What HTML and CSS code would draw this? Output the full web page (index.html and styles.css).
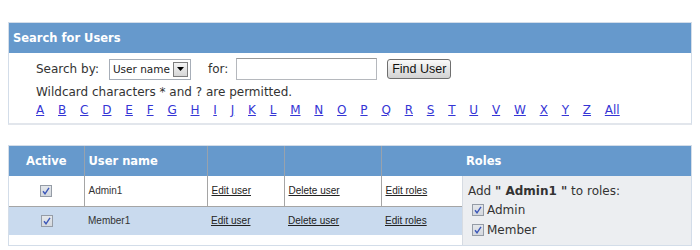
FILE: index.html
```html
<!DOCTYPE html>
<html lang="en">
<head>
<meta charset="UTF-8" />
<title>Manage Users</title>
<link rel="stylesheet" href="styles.css">
</head>
<body>
  <div class="panel">
    <div class="panel-head">Search for Users</div>
    <div class="search-body">
      <div class="search-row">
        <span>Search by:</span>
        <div class="select">
          <span class="select-value">User name</span>
          <span class="select-btn"><svg width="7" height="4" viewBox="0 0 7 4"><path d="M0 0h7L3.5 4z" fill="#000"/></svg></span>
        </div>
        <span class="for-label">for:</span>
        <input class="search-input" type="text" />
        <button class="find-btn" type="button">Find User</button>
      </div>
      <p class="hint">Wildcard characters * and ? are permitted.</p>
      <div class="alpha">
        <a href="#">A</a><a href="#">B</a><a href="#">C</a><a href="#">D</a><a href="#">E</a><a href="#">F</a><a href="#">G</a><a href="#">H</a><a href="#">I</a><a href="#">J</a><a href="#">K</a><a href="#">L</a><a href="#">M</a><a href="#">N</a><a href="#">O</a><a href="#">P</a><a href="#">Q</a><a href="#">R</a><a href="#">S</a><a href="#">T</a><a href="#">U</a><a href="#">V</a><a href="#">W</a><a href="#">X</a><a href="#">Y</a><a href="#">Z</a><a href="#">All</a>
      </div>
    </div>
  </div>

  <div class="users">
    <table class="grid">
      <colgroup>
        <col class="w-active"><col class="w-name"><col class="w-edit"><col class="w-delete"><col class="w-roles">
      </colgroup>
      <thead>
        <tr><th class="center">Active</th><th>User name</th><th></th><th></th><th></th></tr>
      </thead>
      <tbody>
        <tr>
          <td class="center"><span class="cb"><svg width="10" height="10" viewBox="0 0 10 10"><path d="M2 5.2l2 2.6L8 1.8" fill="none" stroke="#3b57b8" stroke-width="1.4"/></svg></span></td>
          <td>Admin1</td>
          <td><a href="#">Edit user</a></td>
          <td><a href="#">Delete user</a></td>
          <td><a href="#">Edit roles</a></td>
        </tr>
        <tr class="alt">
          <td class="center"><span class="cb"><svg width="10" height="10" viewBox="0 0 10 10"><path d="M2 5.2l2 2.6L8 1.8" fill="none" stroke="#3b57b8" stroke-width="1.4"/></svg></span></td>
          <td>Member1</td>
          <td><a href="#">Edit user</a></td>
          <td><a href="#">Delete user</a></td>
          <td><a href="#">Edit roles</a></td>
        </tr>
      </tbody>
    </table>
    <div class="roles">
      <div class="roles-head">Roles</div>
      <div class="roles-body">
        <p class="roles-title">Add <b>" Admin1 "</b> to roles:</p>
        <label class="role"><span class="cb"><svg width="10" height="10" viewBox="0 0 10 10"><path d="M2 5.2l2 2.6L8 1.8" fill="none" stroke="#3b57b8" stroke-width="1.4"/></svg></span>Admin</label>
        <label class="role"><span class="cb"><svg width="10" height="10" viewBox="0 0 10 10"><path d="M2 5.2l2 2.6L8 1.8" fill="none" stroke="#3b57b8" stroke-width="1.4"/></svg></span>Member</label>
      </div>
    </div>
  </div>
</body>
</html>
```
FILE: styles.css
```css
* {
  box-sizing: border-box;
}
body {
  margin: 8px;
  font-family: 'DejaVu Sans', Verdana, sans-serif;
  font-size: 12px;
  color: #333;
  background: #fff;
}

/* Search panel */
.panel {
  margin-top: 14px;
  border: 1px solid #d3dde9;
  border-bottom: 2px solid #e2e6ec;
}
.panel-head {
  height: 30px;
  line-height: 30px;
  padding-left: 4px;
  background: #6699cc;
  color: #fff;
  font-weight: bold;
  font-size: 11.5px;
}
.search-body {
  padding: 5px 0 4px 27px;
}
.search-row {
  display: flex;
  align-items: center;
  height: 22px;
}
.select {
  display: flex;
  align-items: center;
  flex: none;
  margin-left: 10px;
  width: 82px;
  height: 21px;
  border: 1px solid #a7aeb8;
  background: #fff;
}
.select-value {
  flex: 1;
  padding-left: 3px;
  white-space: nowrap;
  overflow: hidden;
  font-size: 10.5px;
  color: #222;
}
.select-btn {
  display: flex;
  align-items: center;
  justify-content: center;
  flex: none;
  width: 15px;
  height: 15px;
  margin-right: 2px;
  border: 1px solid #7d7d7d;
  background: linear-gradient(#f4f4f4, #d6d6d6);
}
.for-label {
  margin-left: 17px;
}
.search-input {
  flex: none;
  margin: 0 0 0 8px;
  width: 141px;
  height: 22px;
  border: 1px solid #b5b8bd;
  border-top-color: #999;
  padding: 0 3px;
  font: inherit;
}
.find-btn {
  flex: none;
  margin-left: 10px;
  height: 20px;
  width: 64px;
  padding: 0;
  border: 1px solid #6f6f6f;
  border-radius: 3px;
  background: linear-gradient(#fafafa, #e6e6e6 50%, #d3d3d3);
  font-family: 'Liberation Sans', Arial, sans-serif;
  font-size: 12.5px;
  color: #111;
}
.hint {
  margin: 3px 0 0;
  line-height: 18px;
}
.alpha {
  line-height: 18px;
}
.alpha a {
  margin-right: 13.8px;
  color: #3535d5;
}

/* Users grid */
.users {
  display: flex;
  margin-top: 20px;
  border: 1px solid #d3dde9;
  height: 101px;
}
.grid {
  width: 453px;
  border-collapse: collapse;
  table-layout: fixed;
  align-self: flex-start;
  font-family: 'Liberation Sans', Tahoma, sans-serif;
  font-size: 10px;
}
.w-active { width: 75px; }
.w-name { width: 123px; }
.w-edit { width: 77px; }
.w-delete { width: 97px; }
.w-roles { width: 81px; }
.grid th {
  height: 30px;
  padding: 0 4px;
  background: #6699cc;
  color: #fff;
  text-align: left;
  font-family: 'DejaVu Sans', Verdana, sans-serif;
  font-size: 11.5px;
  border-right: 1px solid #98a2ad;
}
.grid td {
  height: 30px;
  padding: 0 4px;
  border-right: 1px solid #a5a5a5;
  border-bottom: 1px solid #a5a5a5;
  color: #333;
}
.grid th:last-child,
.grid td:last-child {
  border-right: none;
}
.grid .center {
  text-align: center;
}
.grid a {
  color: #222;
}
.grid tr.alt td {
  height: 29px;
  background: #c9daee;
  border: none;
}

.cb {
  display: inline-flex;
  align-items: center;
  justify-content: center;
  width: 12px;
  height: 12px;
  border: 1px solid #959ca6;
  background: linear-gradient(#e4e7eb, #d4d8de);
  vertical-align: middle;
}

/* Roles column */
.roles {
  flex: 1;
  display: flex;
  flex-direction: column;
}
.roles-head {
  height: 30px;
  line-height: 30px;
  padding-left: 4px;
  background: #6699cc;
  color: #fff;
  font-weight: bold;
  font-size: 11.5px;
}
.roles-body {
  flex: 1;
  padding: 6px 0 0 5px;
  background: #eceef1;
  border-left: 1px solid #d6dbe2;
}
.roles-title {
  margin: 0;
  line-height: 18px;
}
.role {
  display: flex;
  align-items: center;
  height: 20px;
  padding-left: 4px;
}
.role .cb {
  margin-right: 3px;
}
```
